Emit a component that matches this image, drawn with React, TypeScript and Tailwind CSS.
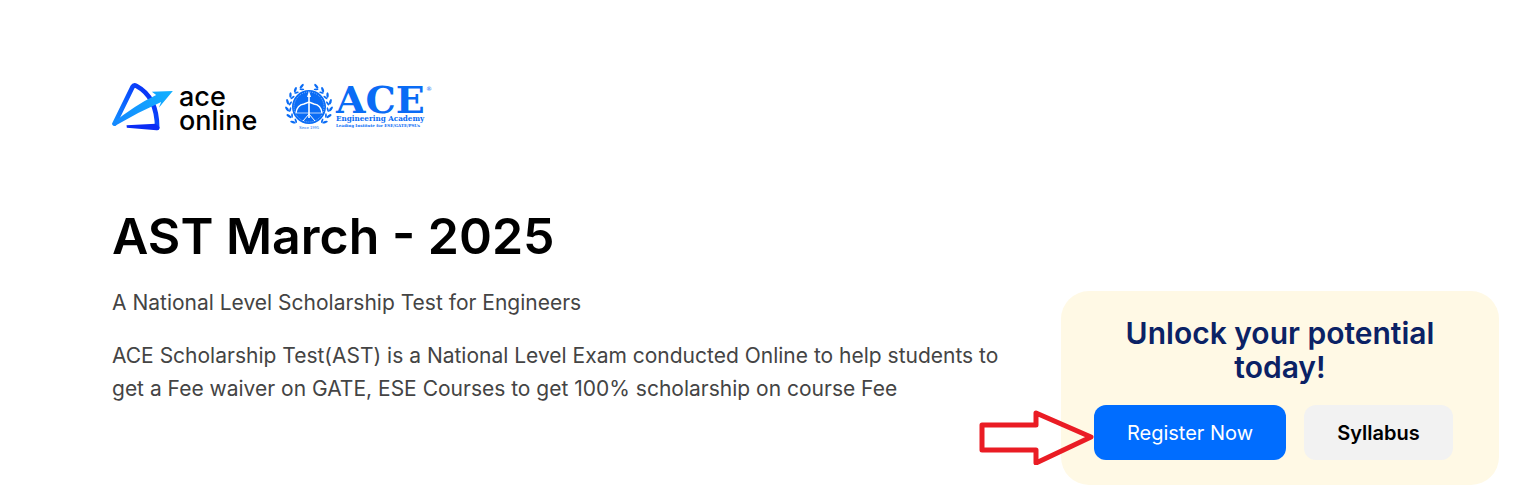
const leafAngles = [22, 41, 60, 79, 98, 117, 136];

function AceOnlineLogo() {
  return (
    <a href="#" aria-label="ace online" className="flex items-center gap-1 text-black">
      <svg className="h-12 w-[62px]" viewBox="24 24 183 144" fill="none">
        <defs>
          <linearGradient id="aceLeg" x1="30" y1="150" x2="150" y2="60" gradientUnits="userSpaceOnUse">
            <stop offset="0" stopColor="#1492ff" />
            <stop offset="0.5" stopColor="#0a5cff" />
            <stop offset="1" stopColor="#0a2cf5" />
          </linearGradient>
          <linearGradient id="aceArrow" x1="28" y1="150" x2="200" y2="48" gradientUnits="userSpaceOnUse">
            <stop offset="0" stopColor="#1488ff" />
            <stop offset="1" stopColor="#12b0ff" />
          </linearGradient>
        </defs>
        <path
          d="M30 146 L84 36 Q88 29 96 33 Q158 66 158 159"
          stroke="url(#aceLeg)"
          strokeWidth="14"
          strokeLinejoin="round"
          strokeLinecap="round"
        />
        <path d="M66 151 L154 146 L165 157 Q165 166 156 166 L67 158Z" fill="#0a2cf5" />
        <path
          d="M24 145 Q24 153 32 152 Q100 112 170 81 L163 98 L205 48 L142 50 L155 60 Q92 90 24 145Z"
          fill="url(#aceArrow)"
        />
      </svg>
      <span className="mt-1 pl-px font-[Inter] text-[27px] leading-6 font-medium">
        ace
        <br />
        online
      </span>
    </a>
  );
}

function AceAcademyLogo() {
  return (
    <a href="#" aria-label="ACE Engineering Academy" className="mt-1">
      <svg
        className="h-[46px] w-[148px] overflow-visible font-['DejaVu_Serif',serif]"
        viewBox="0 0 148 46"
        fill="#0a6cf5"
      >
        {/* Emblem */}
        <circle cx="24" cy="22" r="17" />
        <circle cx="24" cy="22" r="15" fill="none" stroke="#8fbcff" strokeWidth="1" strokeDasharray="0.9 1.2" />
        {leafAngles.map((angle) => (
          <g key={angle}>
            <g transform={`rotate(${angle} 24 22)`}>
              <ellipse cx="23" cy="0" rx="2.9" ry="1.2" transform="rotate(28 23 0)" />
              <ellipse cx="24" cy="3" rx="2.4" ry="0.9" transform="rotate(-25 24 3)" />
            </g>
            <g transform={`rotate(${-angle} 24 22)`}>
              <ellipse cx="25" cy="0" rx="2.9" ry="1.2" transform="rotate(-28 25 0)" />
              <ellipse cx="24" cy="3" rx="2.4" ry="0.9" transform="rotate(25 24 3)" />
            </g>
          </g>
        ))}
        {/* Bow and arrow */}
        <g fill="none" stroke="#fff">
          <path d="M24 10V33" strokeWidth="1.6" />
          <path d="M11 28Q12 20 19 19L24 17L29 19Q36 20 37 28" strokeWidth="1.4" />
          <path d="M11 28H37" strokeWidth="0.7" />
          <path d="M18 36L24 29L30 36" strokeWidth="1" />
        </g>
        <path d="M24 6L26 12H22Z" fill="#fff" />
        <text x="24" y="44" fontSize="4" textAnchor="middle" className="font-['Liberation_Sans']">
          Since 1995
        </text>
        {/* Wordmark */}
        <text x="51" y="28" fontSize="38" fontWeight="700">ACE</text>
        <text x="51" y="36" fontSize="8" fontWeight="700" className="font-['DejaVu_Serif_Condensed','DejaVu_Serif',serif]">
          Engineering Academy
        </text>
        <text x="51" y="42" fontSize="4" fontWeight="700">Leading Institute for ESE/GATE/PSUs</text>
        <text x="141" y="6" fontSize="6">®</text>
      </svg>
    </a>
  );
}

function PointerArrow() {
  return (
    <svg
      className="pointer-events-none absolute top-1 right-full h-14 w-[115px]"
      viewBox="0 0 115 56"
      fill="none"
      aria-hidden="true"
    >
      <path
        d="M3 16H57V4L112 28L57 54V41H3Z"
        stroke="#ea1c24"
        strokeWidth="5"
        strokeLinejoin="round"
      />
    </svg>
  );
}

function SignupCard() {
  return (
    <aside className="w-[438px] shrink-0 rounded-[28px] bg-[#fff9e5] px-8 py-[25px]">
      <h2 className="text-center text-3xl leading-[34px] font-semibold text-[#0b2265]">
        Unlock your potential
        <br />
        today!
      </h2>
      <div className="mt-[21px] flex gap-[18px] pl-px text-xl">
        <div className="relative">
          <PointerArrow />
          <button type="button" className="h-[55px] w-48 rounded-xl bg-[#006dff] text-white">
            Register Now
          </button>
        </div>
        <button type="button" className="h-[55px] w-[149px] rounded-xl bg-[#f2f2f2] font-semibold text-black">
          Syllabus
        </button>
      </div>
    </aside>
  );
}

export default function App() {
  return (
    <div className="bg-white pt-[81px] pr-8 pb-2 pl-28 font-[Inter,sans-serif]">
      <header className="flex items-start gap-7">
        <AceOnlineLogo />
        <AceAcademyLogo />
      </header>
      <main className="flex items-end justify-between gap-8">
        <section className="self-start pt-[73px] pb-20 text-[21px] leading-[33px] text-[#444]">
          <h1 className="text-[50px] leading-[60px] font-semibold text-black">AST March - 2025</h1>
          <p className="mt-5">A National Level Scholarship Test for Engineers</p>
          <p className="mt-5">
            ACE Scholarship Test(AST) is a National Level Exam conducted Online to help students to
            <br />
            get a Fee waiver on GATE, ESE Courses to get 100% scholarship on course Fee
          </p>
        </section>
        <SignupCard />
      </main>
    </div>
  );
}
